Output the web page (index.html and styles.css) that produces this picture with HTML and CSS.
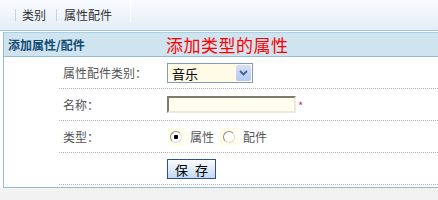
FILE: index.html
```html
<!DOCTYPE html>
<html lang="zh-CN">
<head>
  <meta charset="UTF-8" />
  <title>添加属性/配件</title>
  <link rel="stylesheet" href="styles.css">
</head>
<body>
  <div class="nav">
    <a class="tab tab-first">类别</a>
    <a class="tab tab-last">属性配件</a>
  </div>

  <div class="main">
    <div class="panel">
      <div class="panel-hd">
        <span class="panel-title">添加属性/配件</span>
        <span class="panel-note">添加类型的属性</span>
      </div>

      <div class="row">
        <div class="label">属性配件类别：</div>
        <div class="field">
          <span class="select">
            <select>
              <option>音乐</option>
            </select>
            <span class="select-btn">
              <svg width="9" height="6" viewBox="0 0 9 6"><path d="M1 1 L4.5 4.5 L8 1" fill="none" stroke="#4a5f86" stroke-width="1.8"/></svg>
            </span>
          </span>
        </div>
      </div>

      <div class="row">
        <div class="label">名称：</div>
        <div class="field">
          <input class="text" type="text">
          <span class="req">*</span>
        </div>
      </div>

      <div class="row">
        <div class="label">类型：</div>
        <div class="field">
          <label class="radio"><span class="radio-box"><input type="radio" name="kind" checked></span>属性</label>
          <label class="radio"><span class="radio-box"><input type="radio" name="kind"></span>配件</label>
        </div>
      </div>

      <div class="row">
        <div class="label"></div>
        <div class="field">
          <button class="button">保 存</button>
        </div>
      </div>
      <div class="panel-end"></div>
    </div>
  </div>
</body>
</html>
```

FILE: styles.css
```css
body {
  margin: 0;
  font-family: "Noto Sans CJK SC", "DejaVu Sans", sans-serif;
  font-size: 12px;
  background: #f2f2f2;
  color: #444;
}

.nav {
  display: flex;
  align-items: center;
  height: 30px;
  padding-left: 15px;
  background: linear-gradient(to bottom, #f9fcfe, #e4edf6);
  border-bottom: 1px solid #9fc4dc;
  box-sizing: border-box;
  height: 31px;
}

.tab {
  color: #333;
  font-size: 12px;
  line-height: 12px;
  border-left: 1px solid #c9d3dc;
}

.tab-first {
  padding: 0 10px 0 6px;
}

.tab-last {
  padding: 0 19px 0 7px;
  position: relative;
}

.tab-last:after {
  content: "";
  position: absolute;
  right: 0;
  top: -13px;
  height: 26px;
  border-right: 1px solid #fff;
}

.main {
  background: #fff;
  padding: 1px 0 0 3px;
}

.panel {
  border-left: 1px solid #8dbdd8;
  border-top: 1px solid #a9cfe3;
  border-bottom: 1px solid #8dbdd8;
}

.panel-hd {
  display: flex;
  align-items: center;
  height: 23px;
  background: #cfe4ef;
  border-bottom: 1px solid #8dbdd8;
  padding-left: 4px;
}

.panel-title {
  width: 158px;
  font-weight: bold;
  color: #114a75;
  font-size: 12px;
}

.panel-note {
  color: #ff0000;
  font-size: 17px;
  line-height: 17px;
  letter-spacing: 0.5px;
}

.row {
  display: flex;
  align-items: center;
  height: 31px;
  margin-left: 55px;
  border-bottom: 1px dotted #b0b0b0;
}

.label {
  width: 104px;
  padding-left: 4px;
  color: #555;
}

.field {
  display: flex;
  align-items: center;
}

.select {
  position: relative;
  display: inline-block;
  width: 86px;
  height: 20px;
  box-sizing: border-box;
  border: 1px solid #7f9db9;
  background: #fffbe6;
}

.select select {
  appearance: none;
  border: none;
  background: transparent;
  width: 100%;
  height: 18px;
  padding: 0 0 0 4px;
  font-family: inherit;
  font-size: 13px;
  color: #000;
  outline: none;
}

.select-btn {
  position: absolute;
  right: 1px;
  top: 1px;
  width: 15px;
  height: 16px;
  display: flex;
  align-items: center;
  justify-content: center;
  background: linear-gradient(to bottom, #d5e1fb, #b4c9f4);
  border-radius: 2px;
}

.text {
  width: 129px;
  height: 17px;
  box-sizing: border-box;
  border: 2px solid;
  border-color: #7d7c6c #ebe9dc #ebe9dc #7d7c6c;
  background: #fffdee;
  padding: 0 2px;
  outline: none;
}

.req {
  color: #c8307c;
  margin-left: 2px;
  font-size: 11px;
}

.radio {
  display: flex;
  align-items: center;
  margin-right: 6px;
  color: #555;
}

.radio-box {
  display: flex;
  align-items: center;
  justify-content: center;
  width: 18px;
  height: 18px;
  background: #fffce8;
  margin-right: 5px;
}

.radio input {
  appearance: none;
  margin: 0;
  width: 12px;
  height: 12px;
  border-radius: 50%;
  border: 1px solid;
  border-color: #8a8a8a #dcdcdc #dcdcdc #8a8a8a;
  background: #fff;
}

.radio input:checked {
  background: radial-gradient(circle, #000 0, #000 2px, #fff 2.5px);
}

.button {
  width: 49px;
  height: 20px;
  padding: 0;
  border: 1px solid #2d4f8b;
  background: linear-gradient(to bottom, #fbfdff, #c3d8f2);
  font-family: inherit;
  font-size: 13px;
  color: #000;
  letter-spacing: 2px;
  text-indent: 2px;
  cursor: pointer;
}

.panel-end {
  height: 2px;
}
```
